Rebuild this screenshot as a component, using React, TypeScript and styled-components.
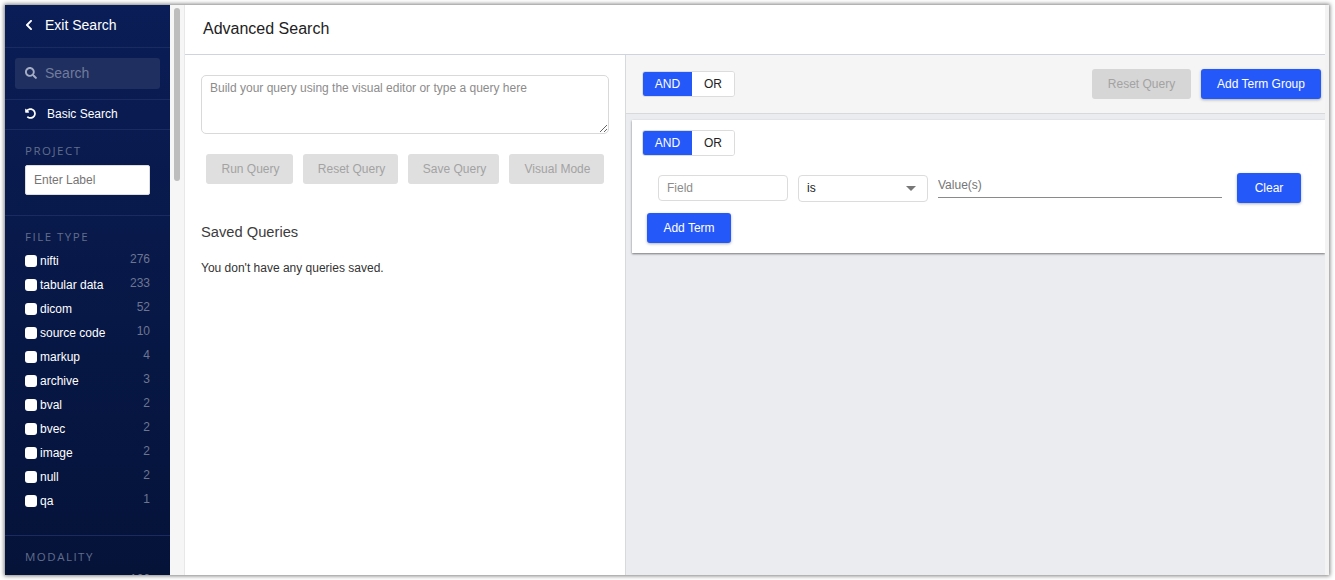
import React from "react";
import styled, { createGlobalStyle } from "styled-components";
import { FaChevronLeft, FaSearch, FaUndoAlt } from "react-icons/fa";

const Global = createGlobalStyle`
  html, body { margin: 0; padding: 0; height: 580px; overflow: hidden; background: #fff; }
  body { font-family: "Liberation Sans", Arial, sans-serif; }
  * { box-sizing: border-box; }
`;

const Page = styled.div`
  padding: 5px 6px 5px 5px;
  height: 580px;
`;
const Win = styled.div`
  display: flex;
  height: 570px;
  background: #f6f6f7;
  overflow: hidden;
  box-shadow: 0 0 4px 1px rgba(0, 0, 0, 0.5);
`;
const Sidebar = styled.aside`
  width: 165px;
  flex: none;
  color: #fff;
  overflow: hidden;
  background: linear-gradient(180deg, #0a1d56 0%, #051339 100%);
`;
const Gutter = styled.div`
  width: 15px;
  flex: none;
  background: #f6f6f7;
  border-right: 1px solid #e8e8ea;
  padding: 3px 4px 0;
`;
const Thumb = styled.div`
  height: 173px;
  border-radius: 4px;
  background: #bdbdbd;
`;
const RightEdge = styled.div`
  width: 4px;
  flex: none;
  background: #f3f3f4;
`;
const ExitRow = styled.div`
  height: 43px;
  display: flex;
  align-items: center;
  padding: 0 0 2px 18px;
  gap: 10px;
  font-size: 14px;
  border-bottom: 1px solid #1a2b62;
`;
const SearchSection = styled.div`
  height: 52px;
  padding: 10px 10px 0;
  border-bottom: 1px solid #1a2b62;
`;
const SearchBox = styled.div`
  height: 31px;
  border-radius: 3px;
  background: #1f2f60;
  display: flex;
  align-items: center;
  padding: 0 0 1px 10px;
  gap: 8px;
`;
const SearchInput = styled.input`
  width: 100px;
  border: 0;
  outline: 0;
  padding: 0;
  background: transparent;
  font: 14px "Liberation Sans", Arial, sans-serif;
  &::placeholder { color: #717c9b; opacity: 1; }
`;
const BasicRow = styled.div`
  height: 30px;
  display: flex;
  align-items: center;
  padding: 0 0 2px 20px;
  gap: 11px;
  font-size: 12px;
  border-bottom: 1px solid #1a2b62;
`;
const Section = styled.section<{ $h: number; $top: number }>`
  height: ${(p) => p.$h}px;
  padding: ${(p) => p.$top}px 20px 0;
  border-bottom: 1px solid #1a2b62;
`;
const SectionLabel = styled.div`
  font: 11.5px/14px "Open Sans", sans-serif;
  letter-spacing: 1.5px;
  color: #626d8b;
`;
const LabelInput = styled.input`
  display: block;
  width: 125px;
  height: 30px;
  margin-top: 7px;
  border: 1px solid #ddd;
  border-radius: 2px;
  padding: 0 8px;
  font: 12px "Liberation Sans", Arial, sans-serif;
  background: #fff;
  &::placeholder { color: #757575; opacity: 1; }
`;
const FacetList = styled.ul`
  list-style: none;
  margin: 5px 0 0;
  padding: 0;
`;
const Facet = styled.li`
  height: 24px;
  display: flex;
  align-items: center;
  font-size: 12px;
  color: #fff;
`;
const Check = styled.input.attrs({ type: "checkbox" })`
  appearance: none;
  width: 12px;
  height: 12px;
  margin: 0 3px 0 0;
  border-radius: 3px;
  background: #fff;
  border: 0;
`;
const Count = styled.span`
  margin-left: auto;
  margin-top: -5px;
  color: #6d7691;
  font-size: 12px;
`;
const Main = styled.main`
  flex: 1;
  min-width: 0;
  display: flex;
  flex-direction: column;
  background: #fff;
`;
const Header = styled.header`
  height: 50px;
  flex: none;
  padding: 0 18px 2px;
  display: flex;
  align-items: center;
  font-size: 16px;
  color: #222;
  border-bottom: 1px solid #cdd3e0;
`;
const Panels = styled.div`
  flex: 1;
  min-height: 0;
  display: flex;
`;
const Editor = styled.div`
  width: 441px;
  flex: none;
  padding: 20px 16px;
  background: #fff;
  border-right: 1px solid #d7d9de;
`;
const QueryInput = styled.textarea`
  display: block;
  width: 408px;
  height: 59px;
  border: 1px solid #d9d9d9;
  border-radius: 5px;
  padding: 5px 8px;
  font: 12px/14px "Liberation Sans", Arial, sans-serif;
  outline: 0;
  &::placeholder { color: #8c8c8c; opacity: 1; }
`;
const QueryActions = styled.div`
  display: flex;
  gap: 10px;
  margin: 20px 0 0 5px;
`;
const Btn = styled.button<{ $w: number }>`
  width: ${(p) => p.$w}px;
  height: 30px;
  flex: none;
  padding: 0;
  border: 0;
  border-radius: 3px;
  font: 12px "Liberation Sans", Arial, sans-serif;
  color: #fff;
  background: #2558f8;
  box-shadow: 0 1px 3px rgba(0, 0, 0, 0.3);
`;
const GhostBtn = styled(Btn)`
  color: #a3a3a3;
  background: #d6d6d6;
  box-shadow: none;
`;
const EditorBtn = styled(GhostBtn)`
  padding-left: 2px;
  background: #dfdfdf;
`;
const SavedTitle = styled.h3`
  margin: 39px 0 0;
  font: 400 14.7px/18px "Liberation Sans", Arial, sans-serif;
  color: #3c3c3c;
`;
const SavedEmpty = styled.p`
  margin: 20px 0 0;
  font: 12px/14px "Liberation Sans", Arial, sans-serif;
  color: #333;
`;
const Builder = styled.div`
  flex: 1;
  min-width: 0;
  background: #ebecf0;
`;
const Toolbar = styled.div`
  height: 59px;
  display: flex;
  align-items: center;
  padding: 0 4px 0 16px;
  gap: 10px;
  background: #f5f5f5;
  border-bottom: 1px solid #d8d9dd;
`;
const Toggle = styled.div`
  display: flex;
  width: 93px;
  height: 26px;
  border: 1px solid #dcdcdc;
  border-radius: 3px;
  background: #fff;
  overflow: hidden;
`;
const ToggleOpt = styled.button<{ $on?: boolean }>`
  flex: ${(p) => (p.$on ? "0 0 49px" : "1")};
  border: 0;
  padding: 0;
  font: 12px "Liberation Sans", Arial, sans-serif;
  color: ${(p) => (p.$on ? "#fff" : "#222")};
  background: ${(p) => (p.$on ? "#2558f8" : "#fff")};
`;
const Spacer = styled.div`
  flex: 1;
`;
const Card = styled.div`
  height: 133px;
  margin: 6px 0 0 6px;
  padding: 10px;
  background: #fff;
  box-shadow: 0 1px 2px rgba(0, 0, 0, 0.5);
`;
const TermRow = styled.div`
  display: flex;
  align-items: center;
  height: 30px;
  margin-top: 17px;
  padding: 0 14px 0 16px;
  gap: 10px;
`;
const FieldInput = styled.input`
  width: 130px;
  flex: none;
  height: 26px;
  border: 1px solid #dcdcdc;
  border-radius: 4px;
  padding: 0 8px;
  font: 12px "Liberation Sans", Arial, sans-serif;
  &::placeholder { color: #8c8c8c; opacity: 1; }
`;
const Select = styled.div`
  width: 130px;
  flex: none;
  height: 27px;
  border: 1px solid #dcdcdc;
  border-radius: 4px;
  padding: 0 8px;
  display: flex;
  align-items: center;
  justify-content: space-between;
  font-size: 12px;
  color: #222;
`;
const Caret = styled.span`
  width: 0;
  height: 0;
  margin-right: 3px;
  border-left: 5.5px solid transparent;
  border-right: 5.5px solid transparent;
  border-top: 5px solid #777;
`;
const ValueInput = styled.input`
  width: 284px;
  flex: none;
  height: 23px;
  margin: 2px 5px 0 0;
  align-self: flex-start;
  border: 0;
  border-bottom: 1px solid #8a8a8a;
  padding: 0 0 2px;
  outline: 0;
  font: 12px "Liberation Sans", Arial, sans-serif;
  &::placeholder { color: #757575; opacity: 1; }
`;
const AddTerm = styled(Btn)`
  display: block;
  margin: 10px 0 0 5px;
`;

const facets: [string, number][] = [
  ["nifti", 276], ["tabular data", 233], ["dicom", 52], ["source code", 10],
  ["markup", 4], ["archive", 3], ["bval", 2], ["bvec", 2], ["image", 2], ["null", 2], ["qa", 1],
];

function AndOr() {
  return (
    <Toggle>
      <ToggleOpt $on>AND</ToggleOpt>
      <ToggleOpt>OR</ToggleOpt>
    </Toggle>
  );
}

export default function App() {
  return (
    <Page>
      <Global />
      <Win>
        <Sidebar>
          <ExitRow><FaChevronLeft size={12} />Exit Search</ExitRow>
          <SearchSection>
            <SearchBox>
              <FaSearch size={12} color="#a4adc4" />
              <SearchInput placeholder="Search" />
            </SearchBox>
          </SearchSection>
          <BasicRow><FaUndoAlt size={11} />Basic Search</BasicRow>
          <Section $h={86} $top={14}>
            <SectionLabel>PROJECT</SectionLabel>
            <LabelInput placeholder="Enter Label" />
          </Section>
          <Section $h={320} $top={14}>
            <SectionLabel>FILE TYPE</SectionLabel>
            <FacetList>
              {facets.map(([name, n]) => (
                <Facet key={name}>
                  <Check />
                  {name}
                  <Count>{n}</Count>
                </Facet>
              ))}
            </FacetList>
          </Section>
          <Section $h={60} $top={14}>
            <SectionLabel>MODALITY</SectionLabel>
            <FacetList>
              <Facet><Count>126</Count></Facet>
            </FacetList>
          </Section>
        </Sidebar>
        <Gutter><Thumb /></Gutter>
        <Main>
          <Header>Advanced Search</Header>
          <Panels>
            <Editor>
              <QueryInput placeholder="Build your query using the visual editor or type a query here" />
              <QueryActions>
                <EditorBtn $w={87}>Run Query</EditorBtn>
                <EditorBtn $w={95}>Reset Query</EditorBtn>
                <EditorBtn $w={91}>Save Query</EditorBtn>
                <EditorBtn $w={95}>Visual Mode</EditorBtn>
              </QueryActions>
              <SavedTitle>Saved Queries</SavedTitle>
              <SavedEmpty>You don't have any queries saved.</SavedEmpty>
            </Editor>
            <Builder>
              <Toolbar>
                <AndOr />
                <Spacer />
                <GhostBtn $w={99}>Reset Query</GhostBtn>
                <Btn $w={120}>Add Term Group</Btn>
              </Toolbar>
              <Card>
                <AndOr />
                <TermRow>
                  <FieldInput placeholder="Field" />
                  <Select>is<Caret /></Select>
                  <ValueInput placeholder="Value(s)" />
                  <Btn $w={64}>Clear</Btn>
                </TermRow>
                <AddTerm $w={84}>Add Term</AddTerm>
              </Card>
            </Builder>
          </Panels>
        </Main>
        <RightEdge />
      </Win>
    </Page>
  );
}
